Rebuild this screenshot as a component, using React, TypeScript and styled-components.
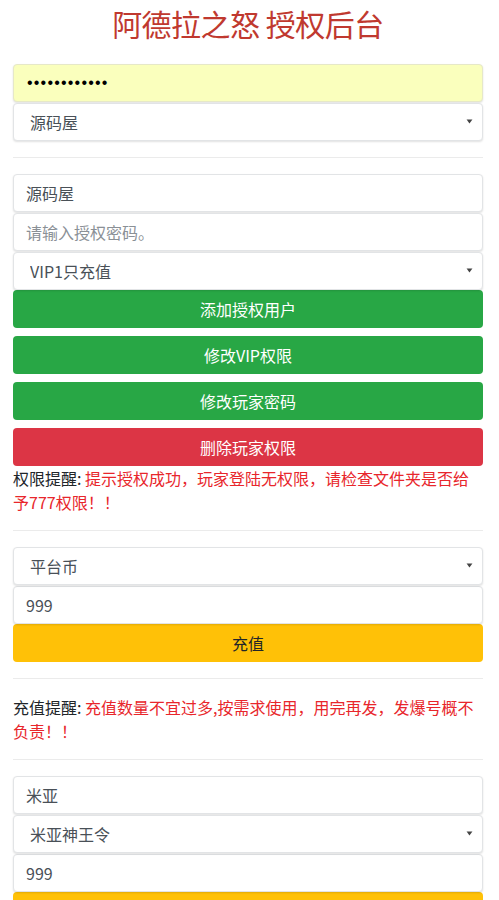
import React from "react";
import styled, { createGlobalStyle, css } from "styled-components";

const Global = createGlobalStyle`
  html, body { margin: 0; padding: 0; background: #fff; }
  body {
    font-family: "Microsoft YaHei", "Noto Sans CJK SC", "Noto Sans", sans-serif;
    font-size: 16px;
    color: #212529;
  }
  * { box-sizing: border-box; }
`;

const Page = styled.div`
  padding: 5px 16px 0 13px;
  width: 499px;
`;

const Title = styled.h1`
  margin: 0 0 23px;
  font-size: 30px;
  line-height: 36px;
  font-weight: 400;
  text-align: center;
  color: #c0392f;
  letter-spacing: -0.5px;
`;

const Stack = styled.div`
  display: flex;
  flex-direction: column;
  gap: 1px;
`;

const controlBase = css`
  display: block;
  width: 100%;
  height: 38px;
  padding: 0 12px;
  font-family: inherit;
  font-size: 16px;
  color: #495057;
  background: #fff;
  border: 1px solid #e2e4e6;
  border-radius: 4px;
  box-shadow: 0 1px 2px rgba(0, 0, 0, 0.12);
  outline: none;
  &::placeholder { color: #8a9096; }
`;

const Input = styled.input<{ $autofill?: boolean }>`
  ${controlBase}
  ${(p) =>
    p.$autofill &&
    css`
      background: #faffbd;
      border-color: #e6e8c8;
      color: #000;
      font-family: "Liberation Sans", Arial, sans-serif;
      font-size: 16px;
      letter-spacing: 1.2px;
      padding-left: 13px;
    `}
`;

const SelectWrap = styled.div`
  position: relative;
`;

const SelectBox = styled.select`
  ${controlBase}
  appearance: none;
  -webkit-appearance: none;
  padding-left: 16px;
`;

const Caret = styled.svg`
  position: absolute;
  right: 10px;
  top: 16px;
  pointer-events: none;
`;

const Btn = styled.button<{ $variant: "success" | "danger" | "warning"; $last?: boolean }>`
  display: block;
  width: 100%;
  height: 38px;
  border: 1px solid transparent;
  border-radius: 4px;
  font-family: inherit;
  font-size: 16px;
  padding: 0;
  margin-bottom: ${(p) => (p.$last ? 0 : 8)}px;
  cursor: pointer;
  ${(p) =>
    p.$variant === "success"
      ? css`background: #28a745; color: #fff;`
      : p.$variant === "danger"
      ? css`background: #dc3545; color: #fff;`
      : css`background: #ffc107; color: #212529;`}
`;

const Note = styled.p`
  margin: 0;
  font-size: 16px;
  line-height: 24px;
  color: #212529;
`;

const Warn = styled.span`
  color: #e8262b;
`;

const Rule = styled.hr`
  margin: 16px 0;
  border: 0;
  border-top: 1px solid rgba(0, 0, 0, 0.08);
`;

const Select: React.FC<{ value: string }> = ({ value }) => (
  <SelectWrap>
    <SelectBox defaultValue={value}>
      <option>{value}</option>
    </SelectBox>
    <Caret width="7" height="5" viewBox="0 0 8 6">
      <path d="M0.5 0.5h7L4 5.5z" fill="#444" />
    </Caret>
  </SelectWrap>
);

export default function App() {
  return (
    <>
      <Global />
      <Page>
        <Title>阿德拉之怒 授权后台</Title>
        <Stack>
          <Input type="password" defaultValue="123456789012" $autofill />
          <Select value="源码屋" />
        </Stack>
        <Rule />
        <Stack>
          <Input defaultValue="源码屋" />
          <Input placeholder="请输入授权密码。" />
          <Select value="VIP1只充值" />
        </Stack>
        <Btn $variant="success">添加授权用户</Btn>
        <Btn $variant="success">修改VIP权限</Btn>
        <Btn $variant="success">修改玩家密码</Btn>
        <Btn $variant="danger" $last>删除玩家权限</Btn>
        <Note>
          权限提醒: <Warn>提示授权成功，玩家登陆无权限，请检查文件夹是否给予777权限！！</Warn>
        </Note>
        <Rule />
        <Stack>
          <Select value="平台币" />
          <Input defaultValue="999" />
        </Stack>
        <Btn $variant="warning" $last>充值</Btn>
        <Rule />
        <Note>
          充值提醒: <Warn>充值数量不宜过多,按需求使用，用完再发，发爆号概不负责！！</Warn>
        </Note>
        <Rule />
        <Stack>
          <Input defaultValue="米亚" />
          <Select value="米亚神王令" />
          <Input defaultValue="999" />
        </Stack>
        <Btn $variant="warning">发送物品</Btn>
      </Page>
    </>
  );
}
